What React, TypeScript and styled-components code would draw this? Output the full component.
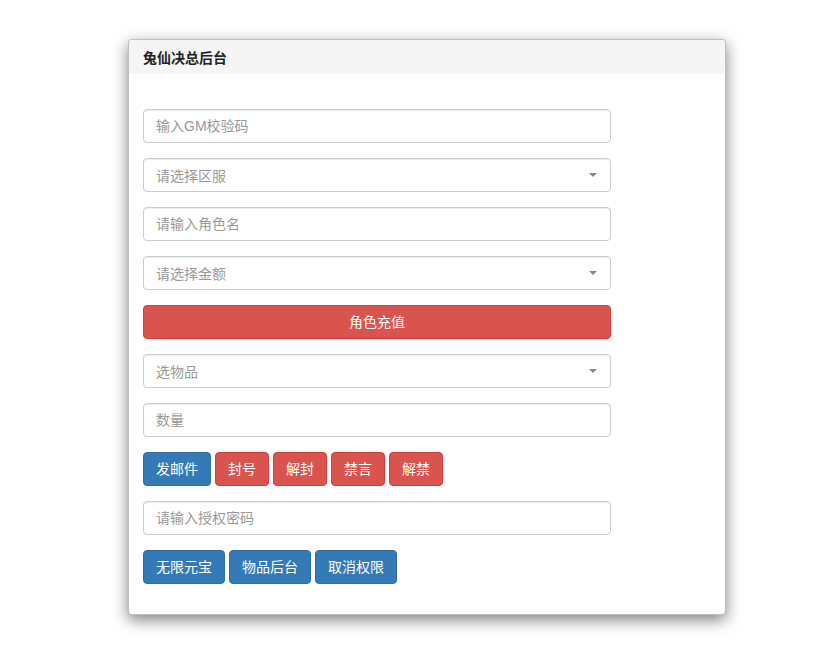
import styled, { createGlobalStyle } from 'styled-components'

const GlobalStyle = createGlobalStyle`
  html, body {
    margin: 0;
    padding: 0;
    background: #fff;
    font-family: "Liberation Sans", "Noto Sans CJK SC", sans-serif;
    font-size: 14px;
    color: #333;
  }
  * {
    box-sizing: border-box;
  }
`

const fields = [
  { kind: 'input', text: '输入GM校验码' },
  { kind: 'select', text: '请选择区服' },
  { kind: 'input', text: '请输入角色名' },
  { kind: 'select', text: '请选择金额' },
]

const banButtons = ['封号', '解封', '禁言', '解禁']
const adminButtons = ['无限元宝', '物品后台', '取消权限']

const App = () => {
  return (
    <>
      <GlobalStyle />
      <Page>
        <Panel>
          <Heading>兔仙决总后台</Heading>
          <Body>
            <Form>
              {fields.map((field) =>
                field.kind === 'select' ? (
                  <SelectBox key={field.text}>
                    <span>{field.text}</span>
                    <Caret />
                  </SelectBox>
                ) : (
                  <TextInput key={field.text} placeholder={field.text} />
                )
              )}
              <Button variant='danger' block>
                角色充值
              </Button>
              <SelectBox>
                <span>选物品</span>
                <Caret />
              </SelectBox>
              <TextInput placeholder='数量' />
              <ButtonRow>
                <Button variant='primary'>发邮件</Button>
                {banButtons.map((label) => (
                  <Button variant='danger' key={label}>
                    {label}
                  </Button>
                ))}
              </ButtonRow>
              <TextInput placeholder='请输入授权密码' />
              <ButtonRow>
                {adminButtons.map((label) => (
                  <Button variant='primary' key={label}>
                    {label}
                  </Button>
                ))}
              </ButtonRow>
            </Form>
          </Body>
        </Panel>
      </Page>
    </>
  )
}

export default App

const Page = styled.div`
  padding: 39px 0 40px 128px;
`

const Panel = styled.div`
  width: 598px;
  background: #fff;
  border: 1px solid rgba(0, 0, 0, 0.25);
  border-radius: 4px;
  box-shadow: 0 5px 15px rgba(0, 0, 0, 0.5);
  overflow: hidden;
`

const Heading = styled.div`
  height: 34px;
  padding: 0 14px 1px;
  display: flex;
  align-items: center;
  background: #f5f5f5;
  font-weight: bold;
  font-size: 14px;
  color: #222;
`

const Body = styled.div`
  padding: 35px 14px 30px;
`

const Form = styled.div`
  width: 468px;
  display: flex;
  flex-direction: column;
  gap: 15px;
`

const fieldBase = `
  width: 100%;
  height: 34px;
  padding: 6px 12px;
  border: 1px solid #ccc;
  border-radius: 4px;
  font-family: "Liberation Sans", "Noto Sans CJK SC", sans-serif;
  font-size: 14px;
  background: #fff;
  box-shadow: inset 0 1px 1px rgba(0, 0, 0, 0.075);
`

const TextInput = styled.input`
  ${fieldBase}
  color: #555;
  outline: none;
  &::placeholder {
    color: #999;
  }
`

const SelectBox = styled.div`
  ${fieldBase}
  display: flex;
  align-items: center;
  justify-content: space-between;
  color: #999;
  padding-right: 13px;
`

const Caret = styled.span`
  width: 0;
  height: 0;
  border-left: 4px solid transparent;
  border-right: 4px solid transparent;
  border-top: 4px solid #888;
`

const ButtonRow = styled.div`
  display: flex;
  gap: 4px;
`

const Button = styled.button<{ variant: 'primary' | 'danger'; block?: boolean }>`
  height: 34px;
  padding: 6px 12px;
  width: ${(p) => (p.block ? '100%' : 'auto')};
  border: 1px solid ${(p) => (p.variant === 'primary' ? '#2e6da4' : '#d43f3a')};
  border-radius: 4px;
  background: ${(p) => (p.variant === 'primary' ? '#337ab7' : '#d9534f')};
  color: #fff;
  font-family: "Liberation Sans", "Noto Sans CJK SC", sans-serif;
  font-size: 14px;
  line-height: 20px;
  cursor: pointer;
`
